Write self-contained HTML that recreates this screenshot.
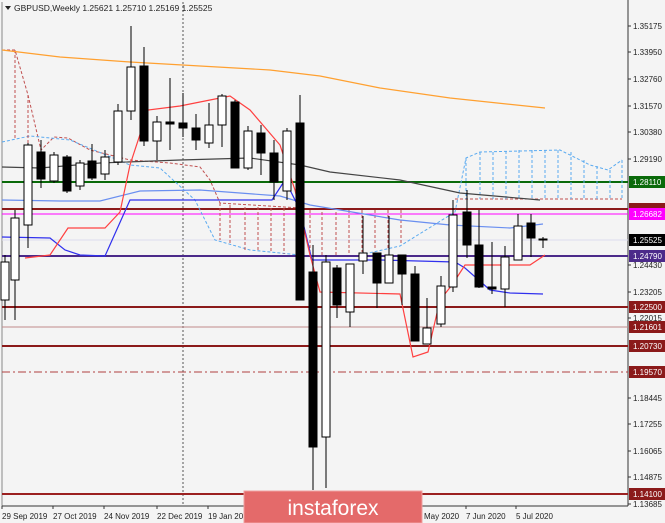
<!DOCTYPE html>
<html><head><meta charset="utf-8"><style>
html,body{margin:0;padding:0;background:#f4f4f4;}
svg{display:block;font-family:"Liberation Sans",sans-serif;}
</style></head><body>
<svg width="665" height="523" viewBox="0 0 665 523" xmlns="http://www.w3.org/2000/svg">
<rect width="665" height="523" fill="#f4f4f4"/>
<line x1="2" y1="2" x2="2" y2="506" stroke="#888" stroke-width="1"/>
<line x1="628" y1="0" x2="628" y2="506" stroke="#333" stroke-width="1"/>
<line x1="2" y1="506" x2="628" y2="506" stroke="#333" stroke-width="1"/>
<line x1="183" y1="2" x2="183" y2="506" stroke="#555" stroke-dasharray="2,2"/>
<line x1="2" y1="240" x2="628" y2="240" stroke="#dde" stroke-width="1"/>
<line x1="2" y1="182" x2="628" y2="182" stroke="#0a6a0a" stroke-width="2"/>
<line x1="2" y1="209" x2="628" y2="209" stroke="#8b1a1a" stroke-width="2"/>
<line x1="2" y1="214" x2="628" y2="214" stroke="#ff00ff" stroke-width="1"/>
<line x1="2" y1="256" x2="628" y2="256" stroke="#4b2a8a" stroke-width="2"/>
<line x1="2" y1="307" x2="628" y2="307" stroke="#8b1a1a" stroke-width="2"/>
<line x1="2" y1="327" x2="628" y2="327" stroke="#c08a8a" stroke-width="1"/>
<line x1="2" y1="346" x2="628" y2="346" stroke="#8b1a1a" stroke-width="2"/>
<line x1="2" y1="372" x2="628" y2="372" stroke="#b04040" stroke-width="1" stroke-dasharray="8,3,2,3"/>
<line x1="2" y1="494" x2="628" y2="494" stroke="#9b2020" stroke-width="2"/>
<g fill="none" stroke-width="1" stroke-dasharray="3,2">
<polyline stroke="#c05050" points="2,50 15,50 28,95 41,150 54,137 68,138 90,150 130,160 170,163 200,167 210,180 220,203 300,208"/>
<polyline stroke="#5aaaf0" points="2,142 30,136 70,140 130,165 160,168 195,200 215,240 250,250 300,255"/>
<polyline stroke="#5aaaf0" points="360,255 400,246 455,212 466,158 480,152 560,150 590,165 608,170 622,160"/>
<polyline stroke="#c05050" points="455,199 622,199"/>
<path stroke="#c05050" d="M15 50V140M28 95V180M220 203V240M230 205V245M245 207V250M258 207V252M271 208V253M284 208V254M297 208V255M310 210V256M322 212V255M336 212V255M349 210V253M362 210V252M375 210V250M388 210V248M401 210V245"/>
<path stroke="#5aaaf0" d="M466 158V199M480 152V199M493 152V199M506 151V199M519 150V199M532 150V199M545 150V199M558 150V199M571 152V199M584 160V199M597 166V199M610 170V199M622 160V199"/>
</g>
<g fill="none" stroke-width="1.2">
<polyline stroke="#ffa030" points="2,50 60,57 130,62 200,66 270,70 320,76 380,88 450,98 545,108"/>
<polyline stroke="#444" points="2,167 40,168 100,163 180,160 250,158 300,165 330,172 400,180 460,193 540,200"/>
<polyline stroke="#6a8ff0" points="2,200 60,201 100,201 140,191 200,190 280,196 310,205 340,210 400,220 450,225 510,228 543,224"/>
<polyline stroke="#3030ee" points="2,237 50,238 65,250 80,255 105,256 130,200 272,200 285,180 300,210 312,260 380,260 455,262 465,268 490,290 510,293 543,294"/>
<polyline stroke="#ff4040" points="25,258 50,255 68,228 105,228 120,212 130,165 148,110 180,106 210,100 230,96 250,110 280,145 295,190 310,255 320,292 400,294 413,357 428,352 440,300 452,285 465,265 530,265 545,255"/>
</g>
<g stroke="#000" stroke-width="1">
<path d="M5 255V320M15 210V320M28 143V248M41 140V188M54 152V183M67 155V193M80 160V190M92 144V180M105 150V180M118 104V165M131 26V120M144 47V146M157 116V160M170 78V150M183 93V137M196 114V150M209 103V148M222 94V147M235 100V168M248 126V170M261 125V175M274 140V200M287 128V200M300 95V300M313 245V490M326 255V488M337 265V318M350 264V327M363 216V274M377 253V308M389 216V283M402 255V305M415 266V341M427 298V344M441 276V327M453 200V292M467 190V258M479 210V288M492 242V294M505 246V307M518 214V260M531 214V257M543 237V248"/>
<g fill="#fff">
<rect x="1" y="262" width="8" height="38"/><rect x="11" y="218" width="8" height="62"/><rect x="24" y="145" width="8" height="80"/>
<rect x="50" y="155" width="8" height="26"/><rect x="76" y="163" width="8" height="23"/><rect x="101" y="157" width="8" height="17"/>
<rect x="114" y="111" width="8" height="51"/><rect x="127" y="67" width="8" height="44"/><rect x="153" y="122" width="8" height="19"/>
<rect x="205" y="125" width="8" height="18"/><rect x="218" y="96" width="8" height="29"/><rect x="244" y="131" width="8" height="37"/>
<rect x="283" y="131" width="8" height="60"/><rect x="322" y="262" width="8" height="175"/><rect x="346" y="264" width="8" height="48"/>
<rect x="359" y="253" width="8" height="8"/><rect x="385" y="255" width="8" height="28"/><rect x="423" y="328" width="8" height="16"/>
<rect x="437" y="286" width="8" height="38"/><rect x="449" y="215" width="8" height="72"/><rect x="501" y="257" width="8" height="32"/>
<rect x="514" y="226" width="8" height="34"/>
</g>
<g fill="#000">
<rect x="37" y="152" width="8" height="27"/><rect x="63" y="157" width="8" height="34"/><rect x="88" y="161" width="8" height="17"/>
<rect x="140" y="66" width="8" height="75"/><rect x="166" y="122" width="8" height="2"/><rect x="179" y="123" width="8" height="5"/>
<rect x="192" y="128" width="8" height="12"/><rect x="231" y="102" width="8" height="66"/><rect x="257" y="133" width="8" height="20"/>
<rect x="270" y="153" width="8" height="29"/><rect x="296" y="123" width="8" height="177"/><rect x="309" y="272" width="8" height="175"/>
<rect x="333" y="268" width="8" height="37"/><rect x="373" y="253" width="8" height="30"/><rect x="398" y="255" width="8" height="19"/>
<rect x="411" y="274" width="8" height="67"/><rect x="463" y="212" width="8" height="33"/><rect x="475" y="245" width="8" height="42"/>
<rect x="488" y="287" width="8" height="2"/><rect x="527" y="223" width="8" height="15"/><rect x="539" y="239" width="8" height="1"/>
</g>
</g>
<text x="14" y="11" font-size="8.5" fill="#222">GBPUSD,Weekly  1.25621 1.25710 1.25169 1.25525</text>
<path d="M5 6h6l-3 4z" fill="#222"/>
<g font-size="8" fill="#222">
<path d="M628 26h3M628 52h3M628 79h3M628 106h3M628 132h3M628 159h3M628 265h3M628 292h3M628 318h3M628 398h3M628 424h3M628 451h3M628 477h3M628 504h3" stroke="#333"/>
<text x="633" y="29">1.35175</text><text x="633" y="55">1.33950</text><text x="633" y="82">1.32760</text>
<text x="633" y="109">1.31570</text><text x="633" y="135">1.30380</text><text x="633" y="162">1.29190</text>
<text x="633" y="268">1.24430</text><text x="633" y="295">1.23205</text><text x="633" y="321">1.22015</text>
<text x="633" y="401">1.18445</text><text x="633" y="427">1.17255</text><text x="633" y="454">1.16065</text>
<text x="633" y="480">1.14875</text><text x="633" y="507">1.13685</text>
</g>
<g font-size="8" fill="#fff">
<rect x="629" y="203" width="36" height="11" fill="#8b1a1a"/>
<rect x="629" y="176" width="36" height="12" fill="#0a6a0a"/><text x="633" y="185">1.28110</text>
<rect x="629" y="208" width="36" height="12" fill="#ff00ff"/><text x="633" y="217">1.26682</text>
<rect x="629" y="234" width="36" height="12" fill="#000"/><text x="633" y="243">1.25525</text>
<rect x="629" y="250" width="36" height="12" fill="#4b2a8a"/><text x="633" y="259">1.24790</text>
<rect x="629" y="301" width="36" height="12" fill="#8b1a1a"/><text x="633" y="310">1.22500</text>
<rect x="629" y="321" width="36" height="12" fill="#8b1a1a"/><text x="633" y="330">1.21601</text>
<rect x="629" y="340" width="36" height="12" fill="#8b1a1a"/><text x="633" y="349">1.20730</text>
<rect x="629" y="366" width="36" height="12" fill="#8b1a1a"/><text x="633" y="375">1.19570</text>
<rect x="629" y="488" width="36" height="12" fill="#8b1a1a"/><text x="633" y="497">1.14100</text>
</g>
<g font-size="8" fill="#222">
<path d="M2 506v3M53 506v3M104 506v3M157 506v3M208 506v3M466 506v3M516 506v3" stroke="#333"/>
<text x="2" y="519">29 Sep 2019</text><text x="53" y="519">27 Oct 2019</text><text x="104" y="519">24 Nov 2019</text>
<text x="157" y="519">22 Dec 2019</text><text x="208" y="519">19 Jan 2020</text><text x="424" y="519">May 2020</text>
<text x="466" y="519">7 Jun 2020</text><text x="516" y="519">5 Jul 2020</text>
</g>
<rect x="244" y="491" width="178" height="32" fill="#e46a6a" stroke="#f0a0a0" stroke-width="1"/>
<text x="333" y="515" font-size="21" fill="#fff" text-anchor="middle">instaforex</text>
</svg>
</body></html>
